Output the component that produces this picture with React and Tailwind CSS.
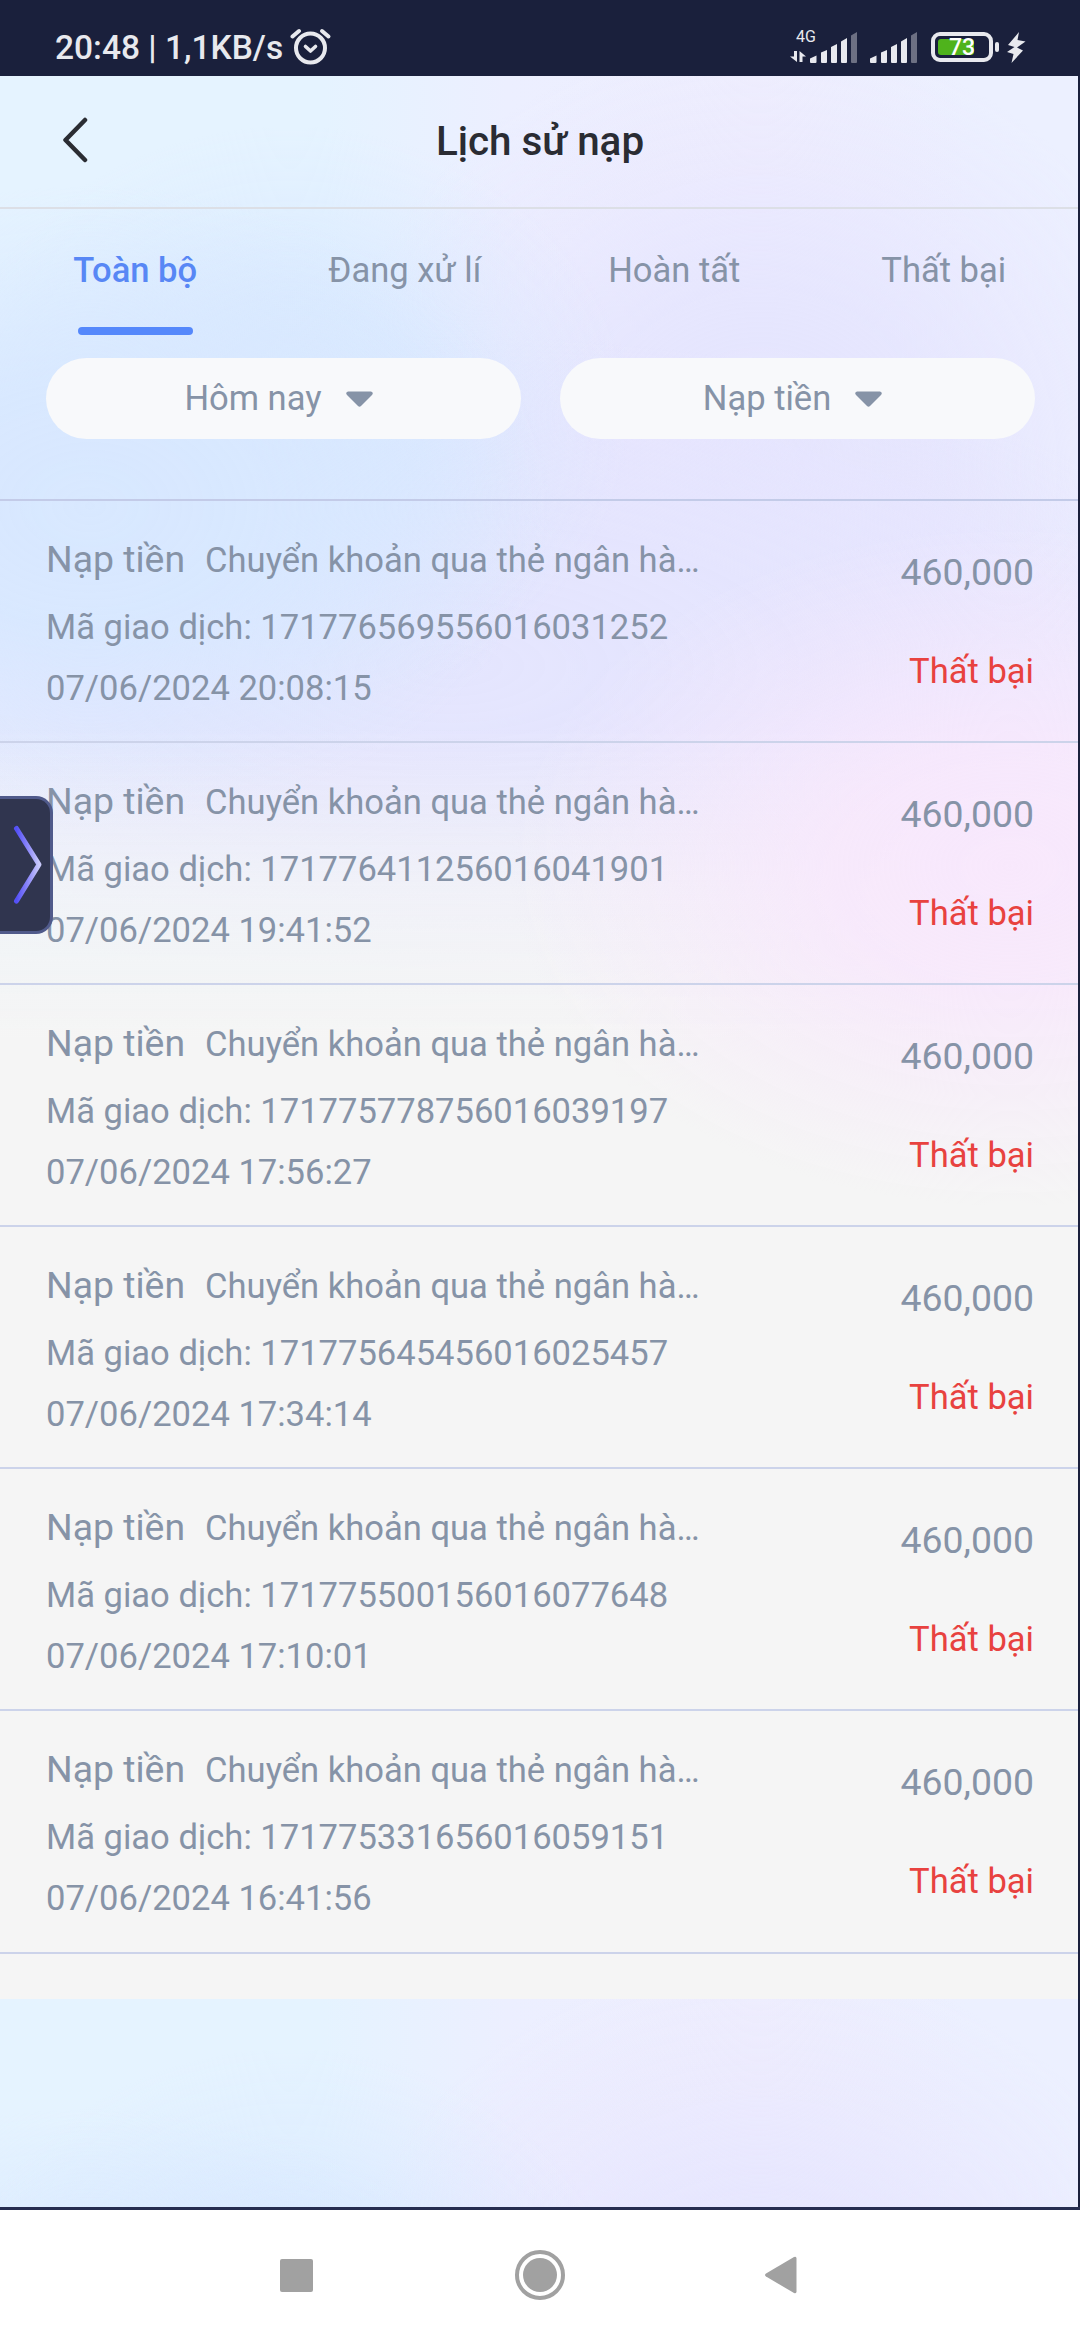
import React, { useState } from "react";

const TABS = ["Toàn bộ", "Đang xử lí", "Hoàn tất", "Thất bại"];

const TRANSACTIONS = [
  { id: "171776569556016031252", time: "07/06/2024 20:08:15" },
  { id: "171776411256016041901", time: "07/06/2024 19:41:52" },
  { id: "171775778756016039197", time: "07/06/2024 17:56:27" },
  { id: "171775645456016025457", time: "07/06/2024 17:34:14" },
  { id: "171775500156016077648", time: "07/06/2024 17:10:01" },
  { id: "171775331656016059151", time: "07/06/2024 16:41:56" },
];

const SignalBars = () => (
  <svg width="48" height="32" viewBox="0 0 48 32" fill="#e8e9ee">
    <path d="M0 26.5 L6.5 23.5 V30 Q6.5 31 5.5 31 H1 Q0 31 0 30 Z" />
    <path d="M11 20.5 L17 18 V30 Q17 31 16 31 H12 Q11 31 11 30 Z" />
    <path d="M21 15 L27 12 V30 Q27 31 26 31 H22 Q21 31 21 30 Z" />
    <path d="M31 9.5 L37 6 V30 Q37 31 36 31 H32 Q31 31 31 30 Z" />
    <path d="M41 3.5 L47 0 V30 Q47 31 46 31 H42 Q41 31 41 30 Z" fill="#6d7083" />
  </svg>
);

const StatusBar = () => (
  <div className="flex h-[76px] items-start bg-[#1a203c] pl-[55px] text-[#e8e9ee]">
    <span className="mt-[28px] text-[33.5px] leading-[40px] font-medium whitespace-nowrap">
      20:48 | 1,1KB/s
    </span>
    <svg className="mt-[27px] ml-[7px]" width="42" height="38" viewBox="0 0 42 38" fill="none" stroke="#e8e9ee" strokeLinecap="round">
      <circle cx="20.5" cy="21" r="14.5" strokeWidth="4" />
      <path d="M2.5 9.5 L9 4" strokeWidth="4" />
      <path d="M32 4 L38.5 9.5" strokeWidth="4" />
      <path d="M15.5 19.5 L20.5 24 L25.5 19.5" strokeWidth="3.6" strokeLinejoin="round" />
    </svg>

    <div className="mr-[54px] ml-auto flex items-start">
      <div className="mt-[30px] flex h-[34px] w-[20px] flex-col items-start">
        <span className="ml-[6px] text-[16px] leading-[13px]">4G</span>
        <svg className="mt-[8px]" width="17" height="12" viewBox="0 0 17 12" fill="#e8e9ee">
          <path d="M4 0 H7 V11 L0 5.5 H4 Z" />
          <path d="M9.500 11 V0 L16 5.500 H12.500 V11 Z" />
        </svg>
      </div>
      <div className="mt-[32px]">
        <SignalBars />
      </div>
      <div className="mt-[32px] ml-[12px]">
        <SignalBars />
      </div>
      <div className="relative mt-[32px] ml-[13px] h-[30px] w-[62px] rounded-[9px] border-4 border-[#e8e9ee]">
        <div className="mt-[3px] ml-[3px] h-[16px] w-[36px] rounded-[3px] bg-[#4fb31c]" />
        <span className="absolute top-0 left-[14px] text-[23px] leading-[23px] font-medium text-white">73</span>
      </div>
      <div className="mt-[42px] ml-[2px] h-[10px] w-[4px] rounded-[2px] bg-[#e8e9ee]" />
      <svg className="mt-[32px] ml-[8px]" width="19" height="31" viewBox="0 0 19 31" fill="#e8e9ee">
        <path d="M12 0 L1 13 L7.500 15 L0 20 L6.500 22 L4.500 31 L16 18.500 L10 15.500 L18.500 9.500 L10.500 8 Z" />
      </svg>
    </div>
  </div>
);

const Header = () => (
  <div className="grid h-[133px] grid-cols-[200px_1fr_200px] items-center border-b-2 border-[#dcdfe6]">
    <button className="ml-[62px] w-fit pb-[4px]">
      <svg width="27" height="46" viewBox="0 0 27 46" fill="none" stroke="#2a2c33" strokeWidth="4.500" strokeLinecap="round" strokeLinejoin="round">
        <path d="M23 3 L3.500 23 L23 43" />
      </svg>
    </button>
    <h1 className="pl-[2px] text-center text-[40.4px] leading-[48px] font-medium text-[#2a2c33]">Lịch sử nạp</h1>
  </div>
);

const FilterButton = ({ label }) => (
  <button className="flex h-[81px] flex-1 items-center justify-center gap-[24px] rounded-full bg-[#f8f9fb] pr-[10px] text-[34.56px] leading-[44px] text-[#8693a7]">
    <span className="pb-[2px]">{label}</span>
    <svg className="mt-[1px]" width="27" height="17" viewBox="0 0 27 17" fill="#8693a7">
      <path d="M2 0.500 H25 Q28 1.500 26 4 L15 15 Q13.500 16.500 12 15 L1 4 Q-1 1.500 2 0.500 Z" />
    </svg>
  </button>
);

const TransactionRow = ({ id, time }) => (
  <div className="flex h-[242.1px] justify-between border-b-2 border-[#ccd3ea] pr-[44px] pl-[46px] text-[34.56px] text-[#8693a7]">
    <div className="pt-[25px]">
      <div className="flex h-[66px] items-baseline gap-[20px] leading-[66px]">
        <span className="text-[37.4px]">Nạp tiền</span>
        <span>Chuyển khoản qua thẻ ngân hà…</span>
      </div>
      <p className="mt-[5px] leading-[61px]">Mã giao dịch: {id}</p>
      <p className="leading-[61px]">{time}</p>
    </div>
    <div className="pt-[41px] text-right leading-[60px]">
      <p className="text-[37.4px]">460,000</p>
      <p className="mt-[39px] text-[#e8423f]">Thất bại</p>
    </div>
  </div>
);

const SideHandle = () => (
  <div className="absolute top-[796px] left-0 flex h-[138px] w-[53px] items-center rounded-r-[17px] border-y-3 border-r-3 border-[#505a8b] bg-[#30354f]">
    <svg className="ml-[12px]" width="32" height="80" viewBox="0 0 32 80" fill="none">
      <defs>
        <linearGradient id="handle" x1="0" y1="0" x2="1" y2="0">
          <stop offset="0" stopColor="#5450f6" />
          <stop offset="0.5" stopColor="#8c88fa" />
          <stop offset="1" stopColor="#c9c9fa" />
        </linearGradient>
      </defs>
      <path d="M4.500 3.500 L27 39.500 L4.500 76" stroke="url(#handle)" strokeWidth="5" strokeLinecap="round" strokeLinejoin="round" />
    </svg>
  </div>
);

const NavBar = () => (
  <div className="flex h-[130px] items-center bg-white pl-[280px]">
    <div className="h-[33px] w-[33px] rounded-[2px] bg-[#a1a1a1]" />
    <div className="ml-[202px] flex h-[50px] w-[50px] items-center justify-center rounded-full border-4 border-[#a1a1a1]">
      <div className="h-[34px] w-[34px] rounded-full bg-[#a1a1a1]" />
    </div>
    <svg className="ml-[200px]" width="32" height="38" viewBox="0 0 32 38" fill="#a1a1a1">
      <path d="M1 17.500 L29 1 Q31.500 0 31.500 2.500 V35.500 Q31.500 38 29 37 L1 20.500 Q-1 19 1 17.500 Z" />
    </svg>
  </div>
);

const App = () => {
  const [activeTab, setActiveTab] = useState("Toàn bộ");

  return (
    <div className="relative flex h-[2340px] w-[1080px] flex-col overflow-hidden bg-[#1a203c] font-['Roboto','Noto_Sans',sans-serif]">
      <StatusBar />

      {/* The soft background tiles vertically, one tile is 1923px high */}
      <div className="h-[2131px] w-[1078px] bg-[radial-gradient(500px_340px_at_1010px_790px,#f8e8fc_0%,#f8e8fcdd_35%,#f8e8fc66_68%,#f8e8fc00_100%),linear-gradient(to_bottom,#f5f5f500_34%,#f5f5f5aa_42%,#f5f5f5_50%),radial-gradient(460px_320px_at_90px_430px,#d8e8ff_0%,#d8e8ffee_40%,#d8e8ff77_70%,#d8e8ff00_100%),radial-gradient(340px_290px_at_290px_340px,#d8e8ff_0%,#d8e8ffcc_40%,#d8e8ff55_70%,#d8e8ff00_100%),radial-gradient(800px_330px_at_450px_590px,#e4e5fe_0%,#e5e5feee_45%,#e7e5fe99_75%,#e7e5fe00_100%),radial-gradient(440px_430px_at_760px_390px,#e4e5fe_0%,#e5e5fedd_40%,#e8e6fe77_70%,#e8e6fe00_100%),linear-gradient(to_right,#e5f3ff_30%,#ecefff_47%,#efeefe_70%,#ecf0ff_90%)] bg-size-[1078px_1923px]">
        <Header />

        <div className="grid h-[149px] grid-cols-4">
          {TABS.map((tab) => (
            <button
              key={tab}
              onClick={() => setActiveTab(tab)}
              className={`flex flex-col items-center pt-[39px] pl-[1px] text-[34.56px] leading-[44px] ${
                activeTab === tab ? "font-medium text-[#5887f5]" : "text-[#8693a7]"
              }`}
            >
              {tab}
              {activeTab === tab && <span className="mt-[35px] h-[8px] w-[115px] rounded-full bg-[#5588fb]" />}
            </button>
          ))}
        </div>

        <div className="flex h-[143px] items-start gap-[39px] border-b-2 border-[#c3cbe8] pr-[43px] pl-[46px]">
          <FilterButton label="Hôm nay" />
          <FilterButton label="Nạp tiền" />
        </div>

        {TRANSACTIONS.map((item) => (
          <TransactionRow key={item.id} {...item} />
        ))}
      </div>

      <div className="h-[3px] bg-[#262d50]" />
      <NavBar />
      <SideHandle />
    </div>
  );
};

export default App;
